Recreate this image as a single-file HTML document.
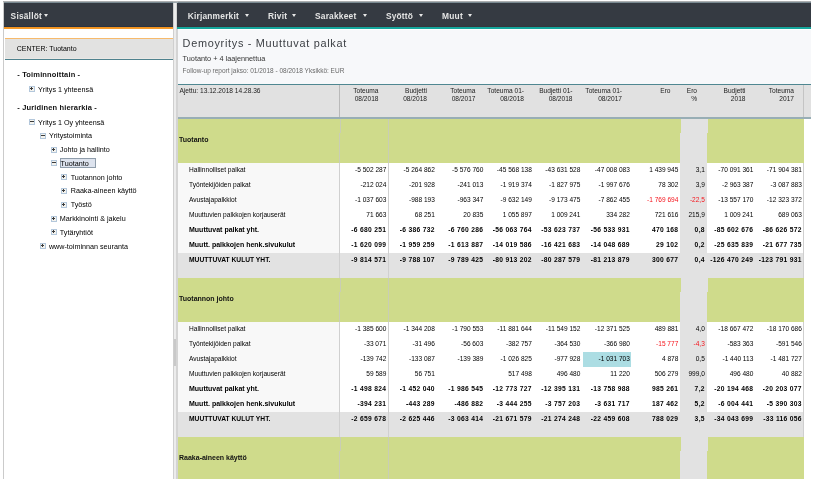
<!DOCTYPE html>
<html><head><meta charset="utf-8"><style>
html,body{margin:0;padding:0}
body{width:813px;height:479px;overflow:hidden;position:relative;background:#fff;font-family:"Liberation Sans",sans-serif}
.t{position:absolute;white-space:nowrap;line-height:1}
.r{position:absolute}
.caret{position:absolute;width:0;height:0;border-left:2.6px solid transparent;border-right:2.6px solid transparent;border-top:3px solid #e8e8e8}
.ic{position:absolute;overflow:visible}
#root{position:absolute;left:0;top:0;width:813px;height:479px;will-change:transform}
</style></head><body><div id="root">
<div class="r" style="left:3.00px;top:1.00px;width:808.00px;height:478.00px;background:#cbcbcb;"></div>
<div class="r" style="left:3.00px;top:1.00px;width:808.00px;height:1.00px;background:#acaeaf;"></div>
<div class="r" style="left:4.00px;top:2.00px;width:807.00px;height:1.00px;background:#7a8a92;"></div>
<div class="r" style="left:4.00px;top:3.00px;width:169.00px;height:476.00px;background:#ffffff;"></div>
<div class="r" style="left:4.00px;top:3.00px;width:169.00px;height:23.00px;background:#353a42;"></div>
<div class="r" style="left:4.00px;top:26.00px;width:169.00px;height:1.00px;background:#2a3443;"></div>
<div class="r" style="left:4.00px;top:27.00px;width:169.00px;height:1.00px;background:#f39420;"></div>
<div class="r" style="left:4.00px;top:28.00px;width:169.00px;height:1.00px;background:#f49a2a;"></div>
<div class="r" style="left:4.50px;top:38.00px;width:168.50px;height:1.00px;background:#f7ba6c;"></div>
<div class="r" style="left:4.50px;top:39.00px;width:168.50px;height:19.00px;background:#e2e2e1;"></div>
<div class="r" style="left:4.50px;top:58.00px;width:168.50px;height:1.00px;background:#eae8e5;"></div>
<div class="r" style="left:4.50px;top:59.00px;width:168.50px;height:1.00px;background:#4f828e;"></div>
<div class="r" style="left:172.70px;top:1.00px;width:1.05px;height:478.00px;background:#cfcfcf;"></div>
<div class="r" style="left:173.75px;top:1.00px;width:2.25px;height:478.00px;background:#ececec;"></div>
<div class="r" style="left:176.00px;top:1.00px;width:1.70px;height:478.00px;background:#d4d4d4;"></div>
<div class="r" style="left:173.60px;top:338.80px;width:2.80px;height:27.00px;background:#c9c9c9;"></div>
<div class="r" style="left:172.70px;top:1.00px;width:5.00px;height:1.00px;background:#b4b6b7;"></div>
<div class="r" style="left:172.70px;top:2.00px;width:5.00px;height:1.00px;background:#9aa6ac;"></div>
<div class="r" style="left:177.70px;top:3.00px;width:633.30px;height:476.00px;background:#ffffff;"></div>
<div class="r" style="left:177.00px;top:3.00px;width:634.00px;height:23.00px;background:#353a42;"></div>
<div class="r" style="left:177.00px;top:26.00px;width:634.00px;height:1.00px;background:#36363d;"></div>
<div class="r" style="left:177.00px;top:27.00px;width:634.00px;height:2.00px;background:#15a69c;"></div>
<div class="r" style="left:177.70px;top:29.00px;width:633.30px;height:1.00px;background:#ffffff;"></div>
<div class="r" style="left:177.70px;top:30.00px;width:633.30px;height:54.00px;background:#f7f8fa;"></div>
<div class="r" style="left:177.50px;top:84.00px;width:633.50px;height:1.00px;background:#4f8791;"></div>
<div class="t" style="left:10.60px;top:12.09px;font-size:8.4px;color:#e4e4e4;font-weight:bold;letter-spacing:0.2px;">Sisällöt</div>
<div class="caret" style="left:43.5px;top:13.9px"></div>
<div class="t" style="left:16.70px;top:45.07px;font-size:7px;color:#000;font-weight:normal;letter-spacing:0px;">CENTER: Tuotanto</div>
<div class="t" style="left:17.30px;top:71.15px;font-size:7.5px;color:#111;font-weight:bold;letter-spacing:0.15px;">- Toiminnoittain -</div>
<svg class="ic" style="left:29.00px;top:86.00px" width="6" height="6" viewBox="0 0 6 6"><rect x="0.5" y="0.5" width="5" height="5" fill="#f4f3ee" stroke="#b3c7db" stroke-width="1"/><rect x="1" y="2" width="3" height="1" fill="#3a3a3a"/><rect x="2" y="1" width="1" height="3" fill="#3a3a3a"/></svg>
<div class="t" style="left:38.00px;top:85.91px;font-size:7.2px;color:#000;font-weight:normal;letter-spacing:0px;">Yritys 1 yhteensä</div>
<div class="t" style="left:17.30px;top:104.25px;font-size:7.5px;color:#111;font-weight:bold;letter-spacing:0.15px;">- Juridinen hierarkia -</div>
<svg class="ic" style="left:29.00px;top:119.00px" width="6" height="6" viewBox="0 0 6 6"><rect x="0.5" y="0.5" width="5" height="5" fill="#f4f3ee" stroke="#b3c7db" stroke-width="1"/><rect x="1" y="2" width="4" height="1" fill="#3a3a3a"/></svg>
<div class="t" style="left:38.00px;top:118.61px;font-size:7.2px;color:#000;font-weight:normal;letter-spacing:0px;">Yritys 1 Oy yhteensä</div>
<svg class="ic" style="left:40.00px;top:133.00px" width="6" height="6" viewBox="0 0 6 6"><rect x="0.5" y="0.5" width="5" height="5" fill="#f4f3ee" stroke="#b3c7db" stroke-width="1"/><rect x="1" y="2" width="4" height="1" fill="#3a3a3a"/></svg>
<div class="t" style="left:48.90px;top:132.31px;font-size:7.2px;color:#000;font-weight:normal;letter-spacing:0px;">Yritystoiminta</div>
<svg class="ic" style="left:51.00px;top:147.00px" width="6" height="6" viewBox="0 0 6 6"><rect x="0.5" y="0.5" width="5" height="5" fill="#f4f3ee" stroke="#b3c7db" stroke-width="1"/><rect x="1" y="2" width="3" height="1" fill="#3a3a3a"/><rect x="2" y="1" width="1" height="3" fill="#3a3a3a"/></svg>
<div class="t" style="left:59.80px;top:146.11px;font-size:7.2px;color:#000;font-weight:normal;letter-spacing:0px;">Johto ja hallinto</div>
<svg class="ic" style="left:51.00px;top:160.00px" width="6" height="6" viewBox="0 0 6 6"><rect x="0.5" y="0.5" width="5" height="5" fill="#f4f3ee" stroke="#b3c7db" stroke-width="1"/><rect x="1" y="2" width="4" height="1" fill="#3a3a3a"/></svg>
<div class="r" style="left:60.00px;top:158.20px;width:35.90px;height:9.60px;background:#dde3ee;box-sizing:border-box;border:1px solid #8f9dab;"></div>
<div class="t" style="left:60.60px;top:159.71px;font-size:7.2px;color:#000;font-weight:normal;letter-spacing:0px;">Tuotanto</div>
<svg class="ic" style="left:61.00px;top:174.00px" width="6" height="6" viewBox="0 0 6 6"><rect x="0.5" y="0.5" width="5" height="5" fill="#f4f3ee" stroke="#b3c7db" stroke-width="1"/><rect x="1" y="2" width="3" height="1" fill="#3a3a3a"/><rect x="2" y="1" width="1" height="3" fill="#3a3a3a"/></svg>
<div class="t" style="left:70.70px;top:173.61px;font-size:7.2px;color:#000;font-weight:normal;letter-spacing:0px;">Tuotannon johto</div>
<svg class="ic" style="left:61.00px;top:188.00px" width="6" height="6" viewBox="0 0 6 6"><rect x="0.5" y="0.5" width="5" height="5" fill="#f4f3ee" stroke="#b3c7db" stroke-width="1"/><rect x="1" y="2" width="3" height="1" fill="#3a3a3a"/><rect x="2" y="1" width="1" height="3" fill="#3a3a3a"/></svg>
<div class="t" style="left:70.70px;top:187.41px;font-size:7.2px;color:#000;font-weight:normal;letter-spacing:0px;">Raaka-aineen käyttö</div>
<svg class="ic" style="left:61.00px;top:202.00px" width="6" height="6" viewBox="0 0 6 6"><rect x="0.5" y="0.5" width="5" height="5" fill="#f4f3ee" stroke="#b3c7db" stroke-width="1"/><rect x="1" y="2" width="3" height="1" fill="#3a3a3a"/><rect x="2" y="1" width="1" height="3" fill="#3a3a3a"/></svg>
<div class="t" style="left:70.70px;top:201.21px;font-size:7.2px;color:#000;font-weight:normal;letter-spacing:0px;">Työstö</div>
<svg class="ic" style="left:51.00px;top:216.00px" width="6" height="6" viewBox="0 0 6 6"><rect x="0.5" y="0.5" width="5" height="5" fill="#f4f3ee" stroke="#b3c7db" stroke-width="1"/><rect x="1" y="2" width="3" height="1" fill="#3a3a3a"/><rect x="2" y="1" width="1" height="3" fill="#3a3a3a"/></svg>
<div class="t" style="left:59.80px;top:215.01px;font-size:7.2px;color:#000;font-weight:normal;letter-spacing:0px;">Markkinointi &amp; jakelu</div>
<svg class="ic" style="left:51.00px;top:229.00px" width="6" height="6" viewBox="0 0 6 6"><rect x="0.5" y="0.5" width="5" height="5" fill="#f4f3ee" stroke="#b3c7db" stroke-width="1"/><rect x="1" y="2" width="3" height="1" fill="#3a3a3a"/><rect x="2" y="1" width="1" height="3" fill="#3a3a3a"/></svg>
<div class="t" style="left:59.80px;top:228.81px;font-size:7.2px;color:#000;font-weight:normal;letter-spacing:0px;">Tytäryhtiöt</div>
<svg class="ic" style="left:40.00px;top:243.00px" width="6" height="6" viewBox="0 0 6 6"><rect x="0.5" y="0.5" width="5" height="5" fill="#f4f3ee" stroke="#b3c7db" stroke-width="1"/><rect x="1" y="2" width="3" height="1" fill="#3a3a3a"/><rect x="2" y="1" width="1" height="3" fill="#3a3a3a"/></svg>
<div class="t" style="left:48.90px;top:242.61px;font-size:7.2px;color:#000;font-weight:normal;letter-spacing:0px;">www-toiminnan seuranta</div>
<div class="t" style="left:187.70px;top:11.99px;font-size:8.4px;color:#e4e4e4;font-weight:bold;letter-spacing:0.2px;">Kirjanmerkit</div>
<div class="caret" style="left:245.20px;top:13.9px"></div>
<div class="t" style="left:268.10px;top:11.99px;font-size:8.4px;color:#e4e4e4;font-weight:bold;letter-spacing:0.2px;">Rivit</div>
<div class="caret" style="left:292.40px;top:13.9px"></div>
<div class="t" style="left:315.00px;top:11.99px;font-size:8.4px;color:#e4e4e4;font-weight:bold;letter-spacing:0.2px;">Sarakkeet</div>
<div class="caret" style="left:362.80px;top:13.9px"></div>
<div class="t" style="left:385.90px;top:11.99px;font-size:8.4px;color:#e4e4e4;font-weight:bold;letter-spacing:0.2px;">Syöttö</div>
<div class="caret" style="left:418.90px;top:13.9px"></div>
<div class="t" style="left:442.10px;top:11.99px;font-size:8.4px;color:#e4e4e4;font-weight:bold;letter-spacing:0.2px;">Muut</div>
<div class="caret" style="left:468.30px;top:13.9px"></div>
<div class="t" style="left:182.60px;top:37.77px;font-size:10.9px;color:#3d4045;font-weight:normal;letter-spacing:0.7px;">Demoyritys - Muuttuvat palkat</div>
<div class="t" style="left:182.60px;top:54.72px;font-size:7.3px;color:#333;font-weight:normal;letter-spacing:0px;">Tuotanto + 4 laajennettua</div>
<div class="t" style="left:182.60px;top:67.90px;font-size:6.5px;color:#6a6a6a;font-weight:normal;letter-spacing:0px;">Follow-up report jakso: 01/2018 - 08/2018 Yksikkö: EUR</div>
<div class="r" style="left:177.70px;top:85.00px;width:633.30px;height:32.10px;background:#e1e1e1;"></div>
<div class="r" style="left:177.70px;top:117.10px;width:633.30px;height:1.70px;background:#98aeb5;"></div>
<div class="r" style="left:339.00px;top:85.00px;width:1.00px;height:32.10px;background:#b9b9b9;"></div>
<div class="r" style="left:803.30px;top:85.00px;width:1.00px;height:32.10px;background:#c4c4c4;"></div>
<div class="t" style="left:179.50px;top:88.01px;font-size:6.6px;color:#222;font-weight:normal;letter-spacing:0px;">Ajettu: 13.12.2018 14.28.36</div>
<div class="t" style="right:434.50px;text-align:right;top:88.41px;font-size:6.6px;color:#222;font-weight:normal;letter-spacing:0px;">Toteuma</div>
<div class="t" style="right:434.50px;text-align:right;top:96.21px;font-size:6.6px;color:#222;font-weight:normal;letter-spacing:0px;">08/2018</div>
<div class="t" style="right:386.00px;text-align:right;top:88.41px;font-size:6.6px;color:#222;font-weight:normal;letter-spacing:0px;">Budjetti</div>
<div class="t" style="right:386.00px;text-align:right;top:96.21px;font-size:6.6px;color:#222;font-weight:normal;letter-spacing:0px;">08/2018</div>
<div class="t" style="right:337.50px;text-align:right;top:88.41px;font-size:6.6px;color:#222;font-weight:normal;letter-spacing:0px;">Toteuma</div>
<div class="t" style="right:337.50px;text-align:right;top:96.21px;font-size:6.6px;color:#222;font-weight:normal;letter-spacing:0px;">08/2017</div>
<div class="t" style="right:289.00px;text-align:right;top:88.41px;font-size:6.6px;color:#222;font-weight:normal;letter-spacing:0px;">Toteuma 01-</div>
<div class="t" style="right:289.00px;text-align:right;top:96.21px;font-size:6.6px;color:#222;font-weight:normal;letter-spacing:0px;">08/2018</div>
<div class="t" style="right:240.50px;text-align:right;top:88.41px;font-size:6.6px;color:#222;font-weight:normal;letter-spacing:0px;">Budjetti 01-</div>
<div class="t" style="right:240.50px;text-align:right;top:96.21px;font-size:6.6px;color:#222;font-weight:normal;letter-spacing:0px;">08/2018</div>
<div class="t" style="right:191.00px;text-align:right;top:88.41px;font-size:6.6px;color:#222;font-weight:normal;letter-spacing:0px;">Toteuma 01-</div>
<div class="t" style="right:191.00px;text-align:right;top:96.21px;font-size:6.6px;color:#222;font-weight:normal;letter-spacing:0px;">08/2017</div>
<div class="t" style="right:142.50px;text-align:right;top:88.41px;font-size:6.6px;color:#222;font-weight:normal;letter-spacing:0px;">Ero</div>
<div class="t" style="right:116.00px;text-align:right;top:88.41px;font-size:6.6px;color:#222;font-weight:normal;letter-spacing:0px;">Ero</div>
<div class="t" style="right:116.00px;text-align:right;top:96.21px;font-size:6.6px;color:#222;font-weight:normal;letter-spacing:0px;">%</div>
<div class="t" style="right:67.50px;text-align:right;top:88.41px;font-size:6.6px;color:#222;font-weight:normal;letter-spacing:0px;">Budjetti</div>
<div class="t" style="right:67.50px;text-align:right;top:96.21px;font-size:6.6px;color:#222;font-weight:normal;letter-spacing:0px;">2018</div>
<div class="t" style="right:19.00px;text-align:right;top:88.41px;font-size:6.6px;color:#222;font-weight:normal;letter-spacing:0px;">Toteuma</div>
<div class="t" style="right:19.00px;text-align:right;top:96.21px;font-size:6.6px;color:#222;font-weight:normal;letter-spacing:0px;">2017</div>
<div class="r" style="left:177.70px;top:118.80px;width:627.20px;height:14.50px;background:#cfdb8b;"></div>
<div class="r" style="left:681.00px;top:118.80px;width:27.00px;height:14.50px;background:#e2e2e2;"></div>
<div class="r" style="left:340.10px;top:118.80px;width:1.00px;height:14.50px;background:#c9cdb5;"></div>
<div class="r" style="left:177.70px;top:133.30px;width:626.30px;height:29.30px;background:#cfdb8b;"></div>
<div class="r" style="left:680.00px;top:133.30px;width:27.00px;height:29.30px;background:#e2e2e2;"></div>
<div class="r" style="left:339.00px;top:133.30px;width:1.00px;height:29.30px;background:#c9cdb5;"></div>
<div class="r" style="left:388.10px;top:118.80px;width:1.00px;height:43.80px;background:#c9cdb5;"></div>
<div class="t" style="left:179.00px;top:135.87px;font-size:7px;color:#111;font-weight:bold;letter-spacing:0px;">Tuotanto</div>
<div class="r" style="left:177.70px;top:162.60px;width:161.30px;height:15.05px;background:#f8f8f8;"></div>
<div class="r" style="left:680.00px;top:162.60px;width:27.00px;height:15.05px;background:#e2e2e2;"></div>
<div class="r" style="left:339.00px;top:162.60px;width:1.00px;height:15.05px;background:#d0d0d0;"></div>
<div class="r" style="left:388.10px;top:162.60px;width:1.00px;height:15.05px;background:#d0d0d0;"></div>
<div class="r" style="left:803.30px;top:162.60px;width:1.00px;height:15.05px;background:#cfcfcf;"></div>
<div class="t" style="left:189.00px;top:166.71px;font-size:6.6px;color:#000;font-weight:normal;letter-spacing:0px;">Hallinnolliset palkat</div>
<div class="t" style="right:426.70px;text-align:right;top:167.06px;font-size:6.55px;color:#000;font-weight:normal;letter-spacing:0px;">-5 502 287</div>
<div class="t" style="right:378.20px;text-align:right;top:167.06px;font-size:6.55px;color:#000;font-weight:normal;letter-spacing:0px;">-5 264 862</div>
<div class="t" style="right:329.70px;text-align:right;top:167.06px;font-size:6.55px;color:#000;font-weight:normal;letter-spacing:0px;">-5 576 760</div>
<div class="t" style="right:281.20px;text-align:right;top:167.06px;font-size:6.55px;color:#000;font-weight:normal;letter-spacing:0px;">-45 568 138</div>
<div class="t" style="right:232.70px;text-align:right;top:167.06px;font-size:6.55px;color:#000;font-weight:normal;letter-spacing:0px;">-43 631 528</div>
<div class="t" style="right:183.20px;text-align:right;top:167.06px;font-size:6.55px;color:#000;font-weight:normal;letter-spacing:0px;">-47 008 083</div>
<div class="t" style="right:134.70px;text-align:right;top:167.06px;font-size:6.55px;color:#000;font-weight:normal;letter-spacing:0px;">1 439 945</div>
<div class="t" style="right:108.20px;text-align:right;top:167.06px;font-size:6.55px;color:#000;font-weight:normal;letter-spacing:0px;">3,1</div>
<div class="t" style="right:59.70px;text-align:right;top:167.06px;font-size:6.55px;color:#000;font-weight:normal;letter-spacing:0px;">-70 091 361</div>
<div class="t" style="right:11.20px;text-align:right;top:167.06px;font-size:6.55px;color:#000;font-weight:normal;letter-spacing:0px;">-71 904 381</div>
<div class="r" style="left:177.70px;top:177.65px;width:161.30px;height:15.05px;background:#f8f8f8;"></div>
<div class="r" style="left:680.00px;top:177.65px;width:27.00px;height:15.05px;background:#e2e2e2;"></div>
<div class="r" style="left:339.00px;top:177.65px;width:1.00px;height:15.05px;background:#d0d0d0;"></div>
<div class="r" style="left:388.10px;top:177.65px;width:1.00px;height:15.05px;background:#d0d0d0;"></div>
<div class="r" style="left:803.30px;top:177.65px;width:1.00px;height:15.05px;background:#cfcfcf;"></div>
<div class="t" style="left:189.00px;top:181.76px;font-size:6.6px;color:#000;font-weight:normal;letter-spacing:0px;">Työntekijöiden palkat</div>
<div class="t" style="right:426.70px;text-align:right;top:182.11px;font-size:6.55px;color:#000;font-weight:normal;letter-spacing:0px;">-212 024</div>
<div class="t" style="right:378.20px;text-align:right;top:182.11px;font-size:6.55px;color:#000;font-weight:normal;letter-spacing:0px;">-201 928</div>
<div class="t" style="right:329.70px;text-align:right;top:182.11px;font-size:6.55px;color:#000;font-weight:normal;letter-spacing:0px;">-241 013</div>
<div class="t" style="right:281.20px;text-align:right;top:182.11px;font-size:6.55px;color:#000;font-weight:normal;letter-spacing:0px;">-1 919 374</div>
<div class="t" style="right:232.70px;text-align:right;top:182.11px;font-size:6.55px;color:#000;font-weight:normal;letter-spacing:0px;">-1 827 975</div>
<div class="t" style="right:183.20px;text-align:right;top:182.11px;font-size:6.55px;color:#000;font-weight:normal;letter-spacing:0px;">-1 997 676</div>
<div class="t" style="right:134.70px;text-align:right;top:182.11px;font-size:6.55px;color:#000;font-weight:normal;letter-spacing:0px;">78 302</div>
<div class="t" style="right:108.20px;text-align:right;top:182.11px;font-size:6.55px;color:#000;font-weight:normal;letter-spacing:0px;">3,9</div>
<div class="t" style="right:59.70px;text-align:right;top:182.11px;font-size:6.55px;color:#000;font-weight:normal;letter-spacing:0px;">-2 963 387</div>
<div class="t" style="right:11.20px;text-align:right;top:182.11px;font-size:6.55px;color:#000;font-weight:normal;letter-spacing:0px;">-3 087 883</div>
<div class="r" style="left:177.70px;top:192.70px;width:161.30px;height:15.05px;background:#f8f8f8;"></div>
<div class="r" style="left:680.00px;top:192.70px;width:27.00px;height:15.05px;background:#e2e2e2;"></div>
<div class="r" style="left:339.00px;top:192.70px;width:1.00px;height:15.05px;background:#d0d0d0;"></div>
<div class="r" style="left:388.10px;top:192.70px;width:1.00px;height:15.05px;background:#d0d0d0;"></div>
<div class="r" style="left:803.30px;top:192.70px;width:1.00px;height:15.05px;background:#cfcfcf;"></div>
<div class="t" style="left:189.00px;top:196.81px;font-size:6.6px;color:#000;font-weight:normal;letter-spacing:0px;">Avustajapalkkiot</div>
<div class="t" style="right:426.70px;text-align:right;top:197.16px;font-size:6.55px;color:#000;font-weight:normal;letter-spacing:0px;">-1 037 603</div>
<div class="t" style="right:378.20px;text-align:right;top:197.16px;font-size:6.55px;color:#000;font-weight:normal;letter-spacing:0px;">-988 193</div>
<div class="t" style="right:329.70px;text-align:right;top:197.16px;font-size:6.55px;color:#000;font-weight:normal;letter-spacing:0px;">-963 347</div>
<div class="t" style="right:281.20px;text-align:right;top:197.16px;font-size:6.55px;color:#000;font-weight:normal;letter-spacing:0px;">-9 632 149</div>
<div class="t" style="right:232.70px;text-align:right;top:197.16px;font-size:6.55px;color:#000;font-weight:normal;letter-spacing:0px;">-9 173 475</div>
<div class="t" style="right:183.20px;text-align:right;top:197.16px;font-size:6.55px;color:#000;font-weight:normal;letter-spacing:0px;">-7 862 455</div>
<div class="t" style="right:134.70px;text-align:right;top:197.16px;font-size:6.55px;color:#f5141c;font-weight:normal;letter-spacing:0px;">-1 769 694</div>
<div class="t" style="right:108.20px;text-align:right;top:197.16px;font-size:6.55px;color:#f5141c;font-weight:normal;letter-spacing:0px;">-22,5</div>
<div class="t" style="right:59.70px;text-align:right;top:197.16px;font-size:6.55px;color:#000;font-weight:normal;letter-spacing:0px;">-13 557 170</div>
<div class="t" style="right:11.20px;text-align:right;top:197.16px;font-size:6.55px;color:#000;font-weight:normal;letter-spacing:0px;">-12 323 372</div>
<div class="r" style="left:177.70px;top:207.75px;width:161.30px;height:15.05px;background:#f8f8f8;"></div>
<div class="r" style="left:680.00px;top:207.75px;width:27.00px;height:15.05px;background:#e2e2e2;"></div>
<div class="r" style="left:339.00px;top:207.75px;width:1.00px;height:15.05px;background:#d0d0d0;"></div>
<div class="r" style="left:388.10px;top:207.75px;width:1.00px;height:15.05px;background:#d0d0d0;"></div>
<div class="r" style="left:803.30px;top:207.75px;width:1.00px;height:15.05px;background:#cfcfcf;"></div>
<div class="t" style="left:189.00px;top:211.86px;font-size:6.6px;color:#000;font-weight:normal;letter-spacing:0px;">Muuttuvien palkkojen korjauserät</div>
<div class="t" style="right:426.70px;text-align:right;top:212.21px;font-size:6.55px;color:#000;font-weight:normal;letter-spacing:0px;">71 663</div>
<div class="t" style="right:378.20px;text-align:right;top:212.21px;font-size:6.55px;color:#000;font-weight:normal;letter-spacing:0px;">68 251</div>
<div class="t" style="right:329.70px;text-align:right;top:212.21px;font-size:6.55px;color:#000;font-weight:normal;letter-spacing:0px;">20 835</div>
<div class="t" style="right:281.20px;text-align:right;top:212.21px;font-size:6.55px;color:#000;font-weight:normal;letter-spacing:0px;">1 055 897</div>
<div class="t" style="right:232.70px;text-align:right;top:212.21px;font-size:6.55px;color:#000;font-weight:normal;letter-spacing:0px;">1 009 241</div>
<div class="t" style="right:183.20px;text-align:right;top:212.21px;font-size:6.55px;color:#000;font-weight:normal;letter-spacing:0px;">334 282</div>
<div class="t" style="right:134.70px;text-align:right;top:212.21px;font-size:6.55px;color:#000;font-weight:normal;letter-spacing:0px;">721 616</div>
<div class="t" style="right:108.20px;text-align:right;top:212.21px;font-size:6.55px;color:#000;font-weight:normal;letter-spacing:0px;">215,9</div>
<div class="t" style="right:59.70px;text-align:right;top:212.21px;font-size:6.55px;color:#000;font-weight:normal;letter-spacing:0px;">1 009 241</div>
<div class="t" style="right:11.20px;text-align:right;top:212.21px;font-size:6.55px;color:#000;font-weight:normal;letter-spacing:0px;">689 063</div>
<div class="r" style="left:177.70px;top:222.80px;width:161.30px;height:15.05px;background:#f8f8f8;"></div>
<div class="r" style="left:680.00px;top:222.80px;width:27.00px;height:15.05px;background:#e2e2e2;"></div>
<div class="r" style="left:339.00px;top:222.80px;width:1.00px;height:15.05px;background:#d0d0d0;"></div>
<div class="r" style="left:388.10px;top:222.80px;width:1.00px;height:15.05px;background:#d0d0d0;"></div>
<div class="r" style="left:803.30px;top:222.80px;width:1.00px;height:15.05px;background:#cfcfcf;"></div>
<div class="t" style="left:189.00px;top:226.27px;font-size:7px;color:#000;font-weight:bold;letter-spacing:0px;">Muuttuvat palkat yht.</div>
<div class="t" style="right:426.70px;text-align:right;top:226.53px;font-size:6.7px;color:#000;font-weight:bold;letter-spacing:0.3px;">-6 680 251</div>
<div class="t" style="right:378.20px;text-align:right;top:226.53px;font-size:6.7px;color:#000;font-weight:bold;letter-spacing:0.3px;">-6 386 732</div>
<div class="t" style="right:329.70px;text-align:right;top:226.53px;font-size:6.7px;color:#000;font-weight:bold;letter-spacing:0.3px;">-6 760 286</div>
<div class="t" style="right:281.20px;text-align:right;top:226.53px;font-size:6.7px;color:#000;font-weight:bold;letter-spacing:0.3px;">-56 063 764</div>
<div class="t" style="right:232.70px;text-align:right;top:226.53px;font-size:6.7px;color:#000;font-weight:bold;letter-spacing:0.3px;">-53 623 737</div>
<div class="t" style="right:183.20px;text-align:right;top:226.53px;font-size:6.7px;color:#000;font-weight:bold;letter-spacing:0.3px;">-56 533 931</div>
<div class="t" style="right:134.70px;text-align:right;top:226.53px;font-size:6.7px;color:#000;font-weight:bold;letter-spacing:0.3px;">470 168</div>
<div class="t" style="right:108.20px;text-align:right;top:226.53px;font-size:6.7px;color:#000;font-weight:bold;letter-spacing:0.3px;">0,8</div>
<div class="t" style="right:59.70px;text-align:right;top:226.53px;font-size:6.7px;color:#000;font-weight:bold;letter-spacing:0.3px;">-85 602 676</div>
<div class="t" style="right:11.20px;text-align:right;top:226.53px;font-size:6.7px;color:#000;font-weight:bold;letter-spacing:0.3px;">-86 626 572</div>
<div class="r" style="left:177.70px;top:237.85px;width:161.30px;height:15.05px;background:#f8f8f8;"></div>
<div class="r" style="left:680.00px;top:237.85px;width:27.00px;height:15.05px;background:#e2e2e2;"></div>
<div class="r" style="left:339.00px;top:237.85px;width:1.00px;height:15.05px;background:#d0d0d0;"></div>
<div class="r" style="left:388.10px;top:237.85px;width:1.00px;height:15.05px;background:#d0d0d0;"></div>
<div class="r" style="left:803.30px;top:237.85px;width:1.00px;height:15.05px;background:#cfcfcf;"></div>
<div class="t" style="left:189.00px;top:241.32px;font-size:7px;color:#000;font-weight:bold;letter-spacing:0px;">Muutt. palkkojen henk.sivukulut</div>
<div class="t" style="right:426.70px;text-align:right;top:241.58px;font-size:6.7px;color:#000;font-weight:bold;letter-spacing:0.3px;">-1 620 099</div>
<div class="t" style="right:378.20px;text-align:right;top:241.58px;font-size:6.7px;color:#000;font-weight:bold;letter-spacing:0.3px;">-1 959 259</div>
<div class="t" style="right:329.70px;text-align:right;top:241.58px;font-size:6.7px;color:#000;font-weight:bold;letter-spacing:0.3px;">-1 613 887</div>
<div class="t" style="right:281.20px;text-align:right;top:241.58px;font-size:6.7px;color:#000;font-weight:bold;letter-spacing:0.3px;">-14 019 586</div>
<div class="t" style="right:232.70px;text-align:right;top:241.58px;font-size:6.7px;color:#000;font-weight:bold;letter-spacing:0.3px;">-16 421 683</div>
<div class="t" style="right:183.20px;text-align:right;top:241.58px;font-size:6.7px;color:#000;font-weight:bold;letter-spacing:0.3px;">-14 048 689</div>
<div class="t" style="right:134.70px;text-align:right;top:241.58px;font-size:6.7px;color:#000;font-weight:bold;letter-spacing:0.3px;">29 102</div>
<div class="t" style="right:108.20px;text-align:right;top:241.58px;font-size:6.7px;color:#000;font-weight:bold;letter-spacing:0.3px;">0,2</div>
<div class="t" style="right:59.70px;text-align:right;top:241.58px;font-size:6.7px;color:#000;font-weight:bold;letter-spacing:0.3px;">-25 635 839</div>
<div class="t" style="right:11.20px;text-align:right;top:241.58px;font-size:6.7px;color:#000;font-weight:bold;letter-spacing:0.3px;">-21 677 735</div>
<div class="r" style="left:177.70px;top:252.90px;width:626.30px;height:24.80px;background:#e2e2e2;"></div>
<div class="r" style="left:339.00px;top:252.90px;width:1.00px;height:24.80px;background:#d0d0d0;"></div>
<div class="r" style="left:388.10px;top:252.90px;width:1.00px;height:24.80px;background:#d0d0d0;"></div>
<div class="r" style="left:803.30px;top:252.90px;width:1.00px;height:24.80px;background:#cfcfcf;"></div>
<div class="t" style="left:189.00px;top:256.63px;font-size:6.7px;color:#000;font-weight:bold;letter-spacing:0px;">MUUTTUVAT KULUT YHT.</div>
<div class="t" style="right:426.70px;text-align:right;top:256.63px;font-size:6.7px;color:#000;font-weight:bold;letter-spacing:0.3px;">-9 814 571</div>
<div class="t" style="right:378.20px;text-align:right;top:256.63px;font-size:6.7px;color:#000;font-weight:bold;letter-spacing:0.3px;">-9 788 107</div>
<div class="t" style="right:329.70px;text-align:right;top:256.63px;font-size:6.7px;color:#000;font-weight:bold;letter-spacing:0.3px;">-9 789 425</div>
<div class="t" style="right:281.20px;text-align:right;top:256.63px;font-size:6.7px;color:#000;font-weight:bold;letter-spacing:0.3px;">-80 913 202</div>
<div class="t" style="right:232.70px;text-align:right;top:256.63px;font-size:6.7px;color:#000;font-weight:bold;letter-spacing:0.3px;">-80 287 579</div>
<div class="t" style="right:183.20px;text-align:right;top:256.63px;font-size:6.7px;color:#000;font-weight:bold;letter-spacing:0.3px;">-81 213 879</div>
<div class="t" style="right:134.70px;text-align:right;top:256.63px;font-size:6.7px;color:#000;font-weight:bold;letter-spacing:0.3px;">300 677</div>
<div class="t" style="right:108.20px;text-align:right;top:256.63px;font-size:6.7px;color:#000;font-weight:bold;letter-spacing:0.3px;">0,4</div>
<div class="t" style="right:59.70px;text-align:right;top:256.63px;font-size:6.7px;color:#000;font-weight:bold;letter-spacing:0.3px;">-126 470 249</div>
<div class="t" style="right:11.20px;text-align:right;top:256.63px;font-size:6.7px;color:#000;font-weight:bold;letter-spacing:0.3px;">-123 791 931</div>
<div class="r" style="left:177.70px;top:277.90px;width:627.20px;height:14.50px;background:#cfdb8b;"></div>
<div class="r" style="left:681.00px;top:277.90px;width:27.00px;height:14.50px;background:#e2e2e2;"></div>
<div class="r" style="left:340.10px;top:277.90px;width:1.00px;height:14.50px;background:#c9cdb5;"></div>
<div class="r" style="left:177.70px;top:292.40px;width:626.30px;height:29.30px;background:#cfdb8b;"></div>
<div class="r" style="left:680.00px;top:292.40px;width:27.00px;height:29.30px;background:#e2e2e2;"></div>
<div class="r" style="left:339.00px;top:292.40px;width:1.00px;height:29.30px;background:#c9cdb5;"></div>
<div class="r" style="left:388.10px;top:277.90px;width:1.00px;height:43.80px;background:#c9cdb5;"></div>
<div class="t" style="left:179.00px;top:294.97px;font-size:7px;color:#111;font-weight:bold;letter-spacing:0px;">Tuotannon johto</div>
<div class="r" style="left:177.70px;top:321.70px;width:161.30px;height:15.05px;background:#f8f8f8;"></div>
<div class="r" style="left:680.00px;top:321.70px;width:27.00px;height:15.05px;background:#e2e2e2;"></div>
<div class="r" style="left:339.00px;top:321.70px;width:1.00px;height:15.05px;background:#d0d0d0;"></div>
<div class="r" style="left:388.10px;top:321.70px;width:1.00px;height:15.05px;background:#d0d0d0;"></div>
<div class="r" style="left:803.30px;top:321.70px;width:1.00px;height:15.05px;background:#cfcfcf;"></div>
<div class="t" style="left:189.00px;top:325.81px;font-size:6.6px;color:#000;font-weight:normal;letter-spacing:0px;">Hallinnolliset palkat</div>
<div class="t" style="right:426.70px;text-align:right;top:326.16px;font-size:6.55px;color:#000;font-weight:normal;letter-spacing:0px;">-1 385 600</div>
<div class="t" style="right:378.20px;text-align:right;top:326.16px;font-size:6.55px;color:#000;font-weight:normal;letter-spacing:0px;">-1 344 208</div>
<div class="t" style="right:329.70px;text-align:right;top:326.16px;font-size:6.55px;color:#000;font-weight:normal;letter-spacing:0px;">-1 790 553</div>
<div class="t" style="right:281.20px;text-align:right;top:326.16px;font-size:6.55px;color:#000;font-weight:normal;letter-spacing:0px;">-11 881 644</div>
<div class="t" style="right:232.70px;text-align:right;top:326.16px;font-size:6.55px;color:#000;font-weight:normal;letter-spacing:0px;">-11 549 152</div>
<div class="t" style="right:183.20px;text-align:right;top:326.16px;font-size:6.55px;color:#000;font-weight:normal;letter-spacing:0px;">-12 371 525</div>
<div class="t" style="right:134.70px;text-align:right;top:326.16px;font-size:6.55px;color:#000;font-weight:normal;letter-spacing:0px;">489 881</div>
<div class="t" style="right:108.20px;text-align:right;top:326.16px;font-size:6.55px;color:#000;font-weight:normal;letter-spacing:0px;">4,0</div>
<div class="t" style="right:59.70px;text-align:right;top:326.16px;font-size:6.55px;color:#000;font-weight:normal;letter-spacing:0px;">-18 667 472</div>
<div class="t" style="right:11.20px;text-align:right;top:326.16px;font-size:6.55px;color:#000;font-weight:normal;letter-spacing:0px;">-18 170 686</div>
<div class="r" style="left:177.70px;top:336.75px;width:161.30px;height:15.05px;background:#f8f8f8;"></div>
<div class="r" style="left:680.00px;top:336.75px;width:27.00px;height:15.05px;background:#e2e2e2;"></div>
<div class="r" style="left:339.00px;top:336.75px;width:1.00px;height:15.05px;background:#d0d0d0;"></div>
<div class="r" style="left:388.10px;top:336.75px;width:1.00px;height:15.05px;background:#d0d0d0;"></div>
<div class="r" style="left:803.30px;top:336.75px;width:1.00px;height:15.05px;background:#cfcfcf;"></div>
<div class="t" style="left:189.00px;top:340.86px;font-size:6.6px;color:#000;font-weight:normal;letter-spacing:0px;">Työntekijöiden palkat</div>
<div class="t" style="right:426.70px;text-align:right;top:341.21px;font-size:6.55px;color:#000;font-weight:normal;letter-spacing:0px;">-33 071</div>
<div class="t" style="right:378.20px;text-align:right;top:341.21px;font-size:6.55px;color:#000;font-weight:normal;letter-spacing:0px;">-31 496</div>
<div class="t" style="right:329.70px;text-align:right;top:341.21px;font-size:6.55px;color:#000;font-weight:normal;letter-spacing:0px;">-56 603</div>
<div class="t" style="right:281.20px;text-align:right;top:341.21px;font-size:6.55px;color:#000;font-weight:normal;letter-spacing:0px;">-382 757</div>
<div class="t" style="right:232.70px;text-align:right;top:341.21px;font-size:6.55px;color:#000;font-weight:normal;letter-spacing:0px;">-364 530</div>
<div class="t" style="right:183.20px;text-align:right;top:341.21px;font-size:6.55px;color:#000;font-weight:normal;letter-spacing:0px;">-366 980</div>
<div class="t" style="right:134.70px;text-align:right;top:341.21px;font-size:6.55px;color:#f5141c;font-weight:normal;letter-spacing:0px;">-15 777</div>
<div class="t" style="right:108.20px;text-align:right;top:341.21px;font-size:6.55px;color:#f5141c;font-weight:normal;letter-spacing:0px;">-4,3</div>
<div class="t" style="right:59.70px;text-align:right;top:341.21px;font-size:6.55px;color:#000;font-weight:normal;letter-spacing:0px;">-583 363</div>
<div class="t" style="right:11.20px;text-align:right;top:341.21px;font-size:6.55px;color:#000;font-weight:normal;letter-spacing:0px;">-591 546</div>
<div class="r" style="left:177.70px;top:351.80px;width:161.30px;height:15.05px;background:#f8f8f8;"></div>
<div class="r" style="left:680.00px;top:351.80px;width:27.00px;height:15.05px;background:#e2e2e2;"></div>
<div class="r" style="left:339.00px;top:351.80px;width:1.00px;height:15.05px;background:#d0d0d0;"></div>
<div class="r" style="left:388.10px;top:351.80px;width:1.00px;height:15.05px;background:#d0d0d0;"></div>
<div class="r" style="left:803.30px;top:351.80px;width:1.00px;height:15.05px;background:#cfcfcf;"></div>
<div class="t" style="left:189.00px;top:355.91px;font-size:6.6px;color:#000;font-weight:normal;letter-spacing:0px;">Avustajapalkkiot</div>
<div class="t" style="right:426.70px;text-align:right;top:356.26px;font-size:6.55px;color:#000;font-weight:normal;letter-spacing:0px;">-139 742</div>
<div class="t" style="right:378.20px;text-align:right;top:356.26px;font-size:6.55px;color:#000;font-weight:normal;letter-spacing:0px;">-133 087</div>
<div class="t" style="right:329.70px;text-align:right;top:356.26px;font-size:6.55px;color:#000;font-weight:normal;letter-spacing:0px;">-139 389</div>
<div class="t" style="right:281.20px;text-align:right;top:356.26px;font-size:6.55px;color:#000;font-weight:normal;letter-spacing:0px;">-1 026 825</div>
<div class="t" style="right:232.70px;text-align:right;top:356.26px;font-size:6.55px;color:#000;font-weight:normal;letter-spacing:0px;">-977 928</div>
<div class="r" style="left:583.00px;top:351.50px;width:48.00px;height:15.05px;background:#acdde3;"></div>
<div class="t" style="right:183.20px;text-align:right;top:356.26px;font-size:6.55px;color:#000;font-weight:normal;letter-spacing:0px;">-1 031 703</div>
<div class="t" style="right:134.70px;text-align:right;top:356.26px;font-size:6.55px;color:#000;font-weight:normal;letter-spacing:0px;">4 878</div>
<div class="t" style="right:108.20px;text-align:right;top:356.26px;font-size:6.55px;color:#000;font-weight:normal;letter-spacing:0px;">0,5</div>
<div class="t" style="right:59.70px;text-align:right;top:356.26px;font-size:6.55px;color:#000;font-weight:normal;letter-spacing:0px;">-1 440 113</div>
<div class="t" style="right:11.20px;text-align:right;top:356.26px;font-size:6.55px;color:#000;font-weight:normal;letter-spacing:0px;">-1 481 727</div>
<div class="r" style="left:177.70px;top:366.85px;width:161.30px;height:15.05px;background:#f8f8f8;"></div>
<div class="r" style="left:680.00px;top:366.85px;width:27.00px;height:15.05px;background:#e2e2e2;"></div>
<div class="r" style="left:339.00px;top:366.85px;width:1.00px;height:15.05px;background:#d0d0d0;"></div>
<div class="r" style="left:388.10px;top:366.85px;width:1.00px;height:15.05px;background:#d0d0d0;"></div>
<div class="r" style="left:803.30px;top:366.85px;width:1.00px;height:15.05px;background:#cfcfcf;"></div>
<div class="t" style="left:189.00px;top:370.96px;font-size:6.6px;color:#000;font-weight:normal;letter-spacing:0px;">Muuttuvien palkkojen korjauserät</div>
<div class="t" style="right:426.70px;text-align:right;top:371.31px;font-size:6.55px;color:#000;font-weight:normal;letter-spacing:0px;">59 589</div>
<div class="t" style="right:378.20px;text-align:right;top:371.31px;font-size:6.55px;color:#000;font-weight:normal;letter-spacing:0px;">56 751</div>
<div class="t" style="right:281.20px;text-align:right;top:371.31px;font-size:6.55px;color:#000;font-weight:normal;letter-spacing:0px;">517 498</div>
<div class="t" style="right:232.70px;text-align:right;top:371.31px;font-size:6.55px;color:#000;font-weight:normal;letter-spacing:0px;">496 480</div>
<div class="t" style="right:183.20px;text-align:right;top:371.31px;font-size:6.55px;color:#000;font-weight:normal;letter-spacing:0px;">11 220</div>
<div class="t" style="right:134.70px;text-align:right;top:371.31px;font-size:6.55px;color:#000;font-weight:normal;letter-spacing:0px;">506 279</div>
<div class="t" style="right:108.20px;text-align:right;top:371.31px;font-size:6.55px;color:#000;font-weight:normal;letter-spacing:0px;">999,0</div>
<div class="t" style="right:59.70px;text-align:right;top:371.31px;font-size:6.55px;color:#000;font-weight:normal;letter-spacing:0px;">496 480</div>
<div class="t" style="right:11.20px;text-align:right;top:371.31px;font-size:6.55px;color:#000;font-weight:normal;letter-spacing:0px;">40 882</div>
<div class="r" style="left:177.70px;top:381.90px;width:161.30px;height:15.05px;background:#f8f8f8;"></div>
<div class="r" style="left:680.00px;top:381.90px;width:27.00px;height:15.05px;background:#e2e2e2;"></div>
<div class="r" style="left:339.00px;top:381.90px;width:1.00px;height:15.05px;background:#d0d0d0;"></div>
<div class="r" style="left:388.10px;top:381.90px;width:1.00px;height:15.05px;background:#d0d0d0;"></div>
<div class="r" style="left:803.30px;top:381.90px;width:1.00px;height:15.05px;background:#cfcfcf;"></div>
<div class="t" style="left:189.00px;top:385.37px;font-size:7px;color:#000;font-weight:bold;letter-spacing:0px;">Muuttuvat palkat yht.</div>
<div class="t" style="right:426.70px;text-align:right;top:385.63px;font-size:6.7px;color:#000;font-weight:bold;letter-spacing:0.3px;">-1 498 824</div>
<div class="t" style="right:378.20px;text-align:right;top:385.63px;font-size:6.7px;color:#000;font-weight:bold;letter-spacing:0.3px;">-1 452 040</div>
<div class="t" style="right:329.70px;text-align:right;top:385.63px;font-size:6.7px;color:#000;font-weight:bold;letter-spacing:0.3px;">-1 986 545</div>
<div class="t" style="right:281.20px;text-align:right;top:385.63px;font-size:6.7px;color:#000;font-weight:bold;letter-spacing:0.3px;">-12 773 727</div>
<div class="t" style="right:232.70px;text-align:right;top:385.63px;font-size:6.7px;color:#000;font-weight:bold;letter-spacing:0.3px;">-12 395 131</div>
<div class="t" style="right:183.20px;text-align:right;top:385.63px;font-size:6.7px;color:#000;font-weight:bold;letter-spacing:0.3px;">-13 758 988</div>
<div class="t" style="right:134.70px;text-align:right;top:385.63px;font-size:6.7px;color:#000;font-weight:bold;letter-spacing:0.3px;">985 261</div>
<div class="t" style="right:108.20px;text-align:right;top:385.63px;font-size:6.7px;color:#000;font-weight:bold;letter-spacing:0.3px;">7,2</div>
<div class="t" style="right:59.70px;text-align:right;top:385.63px;font-size:6.7px;color:#000;font-weight:bold;letter-spacing:0.3px;">-20 194 468</div>
<div class="t" style="right:11.20px;text-align:right;top:385.63px;font-size:6.7px;color:#000;font-weight:bold;letter-spacing:0.3px;">-20 203 077</div>
<div class="r" style="left:177.70px;top:396.95px;width:161.30px;height:15.05px;background:#f8f8f8;"></div>
<div class="r" style="left:680.00px;top:396.95px;width:27.00px;height:15.05px;background:#e2e2e2;"></div>
<div class="r" style="left:339.00px;top:396.95px;width:1.00px;height:15.05px;background:#d0d0d0;"></div>
<div class="r" style="left:388.10px;top:396.95px;width:1.00px;height:15.05px;background:#d0d0d0;"></div>
<div class="r" style="left:803.30px;top:396.95px;width:1.00px;height:15.05px;background:#cfcfcf;"></div>
<div class="t" style="left:189.00px;top:400.42px;font-size:7px;color:#000;font-weight:bold;letter-spacing:0px;">Muutt. palkkojen henk.sivukulut</div>
<div class="t" style="right:426.70px;text-align:right;top:400.68px;font-size:6.7px;color:#000;font-weight:bold;letter-spacing:0.3px;">-394 231</div>
<div class="t" style="right:378.20px;text-align:right;top:400.68px;font-size:6.7px;color:#000;font-weight:bold;letter-spacing:0.3px;">-443 289</div>
<div class="t" style="right:329.70px;text-align:right;top:400.68px;font-size:6.7px;color:#000;font-weight:bold;letter-spacing:0.3px;">-486 882</div>
<div class="t" style="right:281.20px;text-align:right;top:400.68px;font-size:6.7px;color:#000;font-weight:bold;letter-spacing:0.3px;">-3 444 255</div>
<div class="t" style="right:232.70px;text-align:right;top:400.68px;font-size:6.7px;color:#000;font-weight:bold;letter-spacing:0.3px;">-3 757 203</div>
<div class="t" style="right:183.20px;text-align:right;top:400.68px;font-size:6.7px;color:#000;font-weight:bold;letter-spacing:0.3px;">-3 631 717</div>
<div class="t" style="right:134.70px;text-align:right;top:400.68px;font-size:6.7px;color:#000;font-weight:bold;letter-spacing:0.3px;">187 462</div>
<div class="t" style="right:108.20px;text-align:right;top:400.68px;font-size:6.7px;color:#000;font-weight:bold;letter-spacing:0.3px;">5,2</div>
<div class="t" style="right:59.70px;text-align:right;top:400.68px;font-size:6.7px;color:#000;font-weight:bold;letter-spacing:0.3px;">-6 004 441</div>
<div class="t" style="right:11.20px;text-align:right;top:400.68px;font-size:6.7px;color:#000;font-weight:bold;letter-spacing:0.3px;">-5 390 303</div>
<div class="r" style="left:177.70px;top:412.00px;width:626.30px;height:24.80px;background:#e2e2e2;"></div>
<div class="r" style="left:339.00px;top:412.00px;width:1.00px;height:24.80px;background:#d0d0d0;"></div>
<div class="r" style="left:388.10px;top:412.00px;width:1.00px;height:24.80px;background:#d0d0d0;"></div>
<div class="r" style="left:803.30px;top:412.00px;width:1.00px;height:24.80px;background:#cfcfcf;"></div>
<div class="t" style="left:189.00px;top:415.73px;font-size:6.7px;color:#000;font-weight:bold;letter-spacing:0px;">MUUTTUVAT KULUT YHT.</div>
<div class="t" style="right:426.70px;text-align:right;top:415.73px;font-size:6.7px;color:#000;font-weight:bold;letter-spacing:0.3px;">-2 659 678</div>
<div class="t" style="right:378.20px;text-align:right;top:415.73px;font-size:6.7px;color:#000;font-weight:bold;letter-spacing:0.3px;">-2 625 446</div>
<div class="t" style="right:329.70px;text-align:right;top:415.73px;font-size:6.7px;color:#000;font-weight:bold;letter-spacing:0.3px;">-3 063 414</div>
<div class="t" style="right:281.20px;text-align:right;top:415.73px;font-size:6.7px;color:#000;font-weight:bold;letter-spacing:0.3px;">-21 671 579</div>
<div class="t" style="right:232.70px;text-align:right;top:415.73px;font-size:6.7px;color:#000;font-weight:bold;letter-spacing:0.3px;">-21 274 248</div>
<div class="t" style="right:183.20px;text-align:right;top:415.73px;font-size:6.7px;color:#000;font-weight:bold;letter-spacing:0.3px;">-22 459 608</div>
<div class="t" style="right:134.70px;text-align:right;top:415.73px;font-size:6.7px;color:#000;font-weight:bold;letter-spacing:0.3px;">788 029</div>
<div class="t" style="right:108.20px;text-align:right;top:415.73px;font-size:6.7px;color:#000;font-weight:bold;letter-spacing:0.3px;">3,5</div>
<div class="t" style="right:59.70px;text-align:right;top:415.73px;font-size:6.7px;color:#000;font-weight:bold;letter-spacing:0.3px;">-34 043 699</div>
<div class="t" style="right:11.20px;text-align:right;top:415.73px;font-size:6.7px;color:#000;font-weight:bold;letter-spacing:0.3px;">-33 116 056</div>
<div class="r" style="left:177.70px;top:436.90px;width:627.20px;height:14.50px;background:#cfdb8b;"></div>
<div class="r" style="left:681.00px;top:436.90px;width:27.00px;height:14.50px;background:#e2e2e2;"></div>
<div class="r" style="left:340.10px;top:436.90px;width:1.00px;height:14.50px;background:#c9cdb5;"></div>
<div class="r" style="left:177.70px;top:451.40px;width:626.30px;height:29.30px;background:#cfdb8b;"></div>
<div class="r" style="left:680.00px;top:451.40px;width:27.00px;height:29.30px;background:#e2e2e2;"></div>
<div class="r" style="left:339.00px;top:451.40px;width:1.00px;height:29.30px;background:#c9cdb5;"></div>
<div class="r" style="left:388.10px;top:436.90px;width:1.00px;height:43.80px;background:#c9cdb5;"></div>
<div class="t" style="left:179.00px;top:453.97px;font-size:7px;color:#111;font-weight:bold;letter-spacing:0px;">Raaka-aineen käyttö</div>
<div class="r" style="left:804.30px;top:118.80px;width:6.70px;height:360.20px;background:#ffffff;"></div>
</div></body></html>
